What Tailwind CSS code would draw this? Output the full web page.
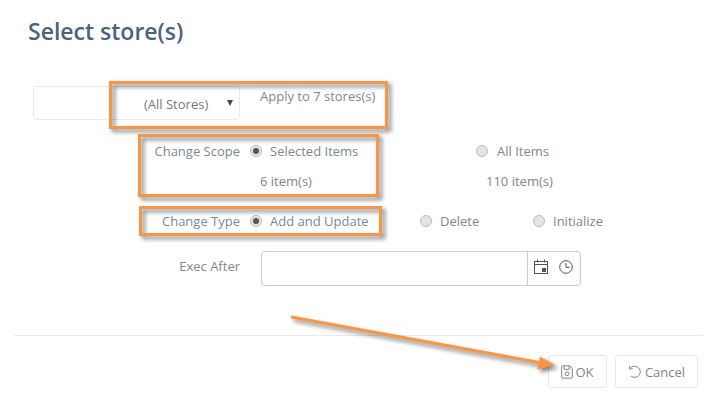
<!DOCTYPE html>
<html lang="en">
<head>
    <meta charset="UTF-8">
    <title>Select store(s)</title>
    <script src="https://cdn.jsdelivr.net/npm/@tailwindcss/browser@4"></script>
</head>
<body class="bg-white font-['Open_Sans',sans-serif] text-[13px] leading-[18px] text-[#7b8794]">
    <div class="relative w-[714px] h-[404px] overflow-hidden">
        <!-- Header -->
        <h2 class="pl-[28px] pt-[16px] h-[86px] text-[23px] leading-[30px] font-semibold text-[#4c6280]">Select store(s)</h2>

        <!-- Store row -->
        <div class="flex h-[34px] pl-[33px]">
            <div class="relative w-[207px] h-[34px] border border-[#ebebeb] rounded-[3px] text-[#6f7a85]">
                <span class="absolute left-[110px] top-[8px]">(All Stores)</span>
                <span class="absolute left-[193px] top-[13px] w-0 h-0 border-x-[3.5px] border-x-transparent border-t-[6px] border-t-[#444]"></span>
            </div>
            <span class="ml-[20px] mt-[1px]">Apply to 7 stores(s)</span>
        </div>

        <!-- Change scope -->
        <div class="flex items-center h-[18px] mt-[22px]">
            <span class="w-[240px] text-right">Change Scope</span>
            <span class="ml-[10px] w-[12px] h-[12px] rounded-full border border-[#bbb] bg-[#e4e4e4] flex items-center justify-center"><span class="w-[6px] h-[6px] rounded-full bg-[#555]"></span></span>
            <span class="ml-[8px] w-[206px]">Selected Items</span>
            <span class="w-[12px] h-[12px] rounded-full border border-[#bbb] bg-[#e4e4e4]"></span>
            <span class="ml-[9px]">All Items</span>
        </div>
        <div class="flex items-center h-[18px] mt-[12px]">
            <span class="ml-[260px] w-[226px]">6 item(s)</span>
            <span>110 item(s)</span>
        </div>

        <!-- Change type -->
        <div class="flex items-center h-[18px] mt-[22px]">
            <span class="w-[240px] text-right">Change Type</span>
            <span class="ml-[10px] w-[12px] h-[12px] rounded-full border border-[#bbb] bg-[#e4e4e4] flex items-center justify-center"><span class="w-[6px] h-[6px] rounded-full bg-[#555]"></span></span>
            <span class="ml-[8px] w-[150px]">Add and Update</span>
            <span class="w-[12px] h-[12px] rounded-full border border-[#bbb] bg-[#e4e4e4]"></span>
            <span class="ml-[8px] w-[93px]">Delete</span>
            <span class="w-[12px] h-[12px] rounded-full border border-[#bbb] bg-[#e4e4e4]"></span>
            <span class="ml-[8px]">Initialize</span>
        </div>

        <!-- Exec after -->
        <div class="flex items-center mt-[21px]">
            <span class="w-[240px] text-right -mt-[5px]">Exec After</span>
            <div class="ml-[21px] flex w-[320px] h-[35px] border border-[#ccc] rounded-[4px]">
                <div class="flex-1 border-r border-[#ccc]"></div>
                <div class="w-[52px] flex items-center gap-[11px] pl-[6px] pb-[4px]">
                    <svg width="14" height="15" viewBox="0 0 14 15" fill="none" stroke="#555" stroke-width="1">
                        <rect x=".5" y="2.500" width="13" height="12" />
                        <path d="M.5 5.500h13M3.500 .5v3M10.500 .5v3" />
                        <rect x="8" y="9" width="4" height="4" fill="#555" stroke="none" />
                    </svg>
                    <svg width="14" height="14" viewBox="0 0 14 14" fill="none" stroke="#555" stroke-width="1">
                        <circle cx="7" cy="7" r="6.300" />
                        <path d="M7 3.200V7.400H10.600" />
                    </svg>
                </div>
            </div>
        </div>

        <!-- Footer -->
        <div class="mt-[49px] mx-[14px] w-[689px] border-t border-[#ebebeb]"></div>
        <div class="flex justify-end gap-[8px] pr-[16px] pt-[19px]">
            <button class="flex items-center justify-center gap-[2px] w-[59px] h-[33px] border border-[#e8e8e8] rounded-[3px] text-[#7b8794]">
                <svg width="12" height="14" viewBox="0 0 12 14" fill="none" stroke="#7b8794" stroke-width="1">
                    <path d="M1.500 .8H8.800L11.300 3.400V12A1.200 1.200 0 0 1 10.100 13.200H1.900A1.200 1.200 0 0 1 .7 12V1.500Z" />
                    <path d="M3.200 1V4.300H8.200V1" />
                    <circle cx="6" cy="8.800" r="1.900" />
                </svg>
                OK
            </button>
            <button class="flex items-center justify-center gap-[3px] w-[83px] h-[33px] border border-[#e8e8e8] rounded-[3px] text-[#7b8794]">
                <svg width="14" height="14" viewBox="0 0 14 14" fill="none" stroke="#7b8794" stroke-width="1">
                    <path d="M2.200 3.400A5.600 5.600 0 1 1 3 11" />
                    <path d="M1.600 .8V3.900H4.800" />
                </svg>
                Cancel
            </button>
        </div>

        <!-- Annotations -->
        <div class="absolute left-[109px] top-[81px] w-[279px] h-[48px] border-[3px] border-[#f79646] drop-shadow-[3px_3px_2px_rgba(0,0,0,0.5)]"></div>
        <div class="absolute left-[138px] top-[134px] w-[241px] h-[63px] border-[3px] border-[#f79646] drop-shadow-[3px_3px_2px_rgba(0,0,0,0.5)]"></div>
        <div class="absolute left-[139px] top-[206px] w-[243px] h-[30px] border-[3px] border-[#f79646] drop-shadow-[3px_3px_2px_rgba(0,0,0,0.5)]"></div>
        <svg class="absolute left-0 top-0 drop-shadow-[3px_3px_2px_rgba(0,0,0,0.5)]" width="714" height="404" viewBox="0 0 714 404" fill="none">
            <path d="M291 317L542 363" stroke="#f79646" stroke-width="3" />
            <path d="M555 365L537 369.500L540 356.500Z" fill="#f79646" />
        </svg>
    </div>
</body>
</html>
